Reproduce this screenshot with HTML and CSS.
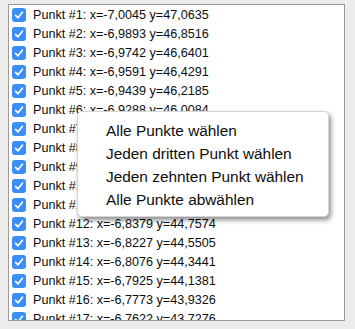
FILE: index.html
```html
<!DOCTYPE html>
<html lang="de">
<head>
    <meta charset="UTF-8">
    <title>Punkte</title>
    <link rel="stylesheet" href="styles.css">
</head>
<body>
    <div class="list-box">
        <ul class="point-list" id="pointList"></ul>
    </div>

    <div class="context-menu">
        <div class="menu-item">Alle Punkte wählen</div>
        <div class="menu-item">Jeden dritten Punkt wählen</div>
        <div class="menu-item">Jeden zehnten Punkt wählen</div>
        <div class="menu-item">Alle Punkte abwählen</div>
    </div>

    <script>
        const points = [
            ['-7,0045', '47,0635'],
            ['-6,9893', '46,8516'],
            ['-6,9742', '46,6401'],
            ['-6,9591', '46,4291'],
            ['-6,9439', '46,2185'],
            ['-6,9288', '46,0084'],
            ['-6,9137', '45,7987'],
            ['-6,8985', '45,5895'],
            ['-6,8834', '45,3808'],
            ['-6,8682', '45,1725'],
            ['-6,8531', '44,9647'],
            ['-6,8379', '44,7574'],
            ['-6,8227', '44,5505'],
            ['-6,8076', '44,3441'],
            ['-6,7925', '44,1381'],
            ['-6,7773', '43,9326'],
            ['-6,7622', '43,7276']
        ];

        const checkSvg = '<svg viewBox="0 0 14 14" width="14" height="14"><path d="M3.6 7.4 L6 9.8 L10.4 4.2" fill="none" stroke="#fff" stroke-width="1.7" stroke-linecap="round" stroke-linejoin="round"/></svg>';

        const list = document.getElementById('pointList');
        points.forEach((p, i) => {
            const li = document.createElement('li');
            li.className = 'point-row';
            li.innerHTML = '<span class="check">' + checkSvg + '</span>' +
                '<span class="label">Punkt #' + (i + 1) + ': x=' + p[0] + ' y=' + p[1] + '</span>';
            list.appendChild(li);
        });
    </script>
</body>
</html>
```

FILE: styles.css
```css
body {
    margin: 0;
    padding: 4px 10px 8px 8px;
    background: #ececec;
    font-family: 'Liberation Sans', Arial, sans-serif;
    height: 329px;
    box-sizing: border-box;
    overflow: hidden;
}

.list-box {
    height: 317px;
    box-sizing: border-box;
    background: #fff;
    border: 1px solid #9a9a9a;
    overflow: hidden;
}

.point-list {
    list-style: none;
    margin: 0;
    padding: 0 0 0 3px;
}

.point-row {
    display: flex;
    align-items: center;
    height: 19px;
    font-size: 12.6px;
    color: #0d0d0d;
}

.check {
    width: 14px;
    height: 14px;
    border-radius: 3px;
    background: #3a8ef6;
    margin-right: 7px;
    display: flex;
    flex-shrink: 0;
}

.context-menu {
    position: absolute;
    left: 77px;
    top: 111px;
    width: 252px;
    height: 106px;
    box-sizing: border-box;
    padding: 7px 0 0 28px;
    background: #fff;
    border: 1px solid #d6d6d6;
    border-radius: 5px;
    box-shadow: 2px 3px 5px rgba(0, 0, 0, 0.45);
}

.menu-item {
    height: 23px;
    line-height: 23px;
    font-size: 15.4px;
    color: #0d0d0d;
}
```
